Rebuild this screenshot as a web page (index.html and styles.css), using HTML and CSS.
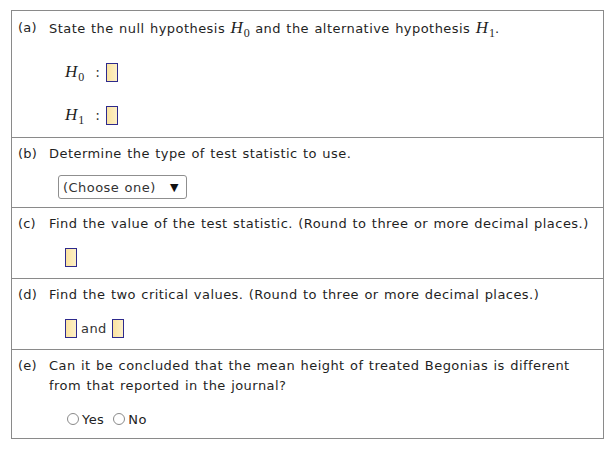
FILE: index.html
```html
<!DOCTYPE html>
<html>
<head>
<meta charset="utf-8">
<link rel="stylesheet" href="styles.css">
</head>
<body>
<div class="sheet">
  <div class="part part-a">
    <span class="tag">(a)</span>
    <div class="body">
      <div class="line">State the null hypothesis <span class="math"><i>H</i><sub>0</sub></span> and the alternative hypothesis <span class="math"><i>H</i><sub>1</sub></span>.</div>
      <div class="hyp"><span class="math"><i>H</i><sub>0</sub></span><span class="colon">:</span><span class="box"></span></div>
      <div class="hyp"><span class="math"><i>H</i><sub>1</sub></span><span class="colon">:</span><span class="box"></span></div>
    </div>
  </div>
  <div class="part part-b">
    <span class="tag">(b)</span>
    <div class="body">
      <div class="line">Determine the type of test statistic to use.</div>
      <div class="select"><span>(Choose one)</span><span class="arrow">&#9660;</span></div>
    </div>
  </div>
  <div class="part part-c">
    <span class="tag">(c)</span>
    <div class="body">
      <div class="line">Find the value of the test statistic. (Round to three or more decimal places.)</div>
      <div class="answers"><span class="box"></span></div>
    </div>
  </div>
  <div class="part part-d">
    <span class="tag">(d)</span>
    <div class="body">
      <div class="line">Find the two critical values. (Round to three or more decimal places.)</div>
      <div class="answers"><span class="box"></span><span class="and">and</span><span class="box"></span></div>
    </div>
  </div>
  <div class="part part-e">
    <span class="tag">(e)</span>
    <div class="body">
      <div class="line">Can it be concluded that the mean height of treated Begonias is different from that reported in the journal?</div>
      <div class="answers radios">
        <span class="radio"></span><span class="rlabel">Yes</span>
        <span class="radio second"></span><span class="rlabel">No</span>
      </div>
    </div>
  </div>
</div>
</body>
</html>
```
FILE: styles.css
```css
html, body {
  margin: 0;
  padding: 0;
  background: #ffffff;
}
body {
  font-family: "DejaVu Sans", Verdana, sans-serif;
  font-size: 13px;
  letter-spacing: 0.45px;
  word-spacing: 0.8px;
  color: #1f1f1f;
}
.sheet {
  margin: 10px 0 0 11px;
  width: 591px;
  border: 1px solid #8a8a8a;
}
.part {
  display: grid;
  grid-template-columns: 31px 1fr;
  padding: 6px 6px 0 6px;
  box-sizing: border-box;
  border-top: 1px solid #8a8a8a;
}
.part-a { border-top: none; height: 126px; padding-top: 7px; }
.part-b { height: 70px; }
.part-c { height: 71px; }
.part-d { height: 71px; }
.part-e { height: 89px; }
.tag {
  line-height: 20px;
  white-space: nowrap;
  letter-spacing: 0.2px;
}
.line {
  line-height: 20px;
}
.math {
  font-family: "Liberation Serif", "Times New Roman", serif;
  font-size: 17px;
  letter-spacing: 0;
  white-space: nowrap;
}
.math i {
  font-style: italic;
}
.math sub {
  font-size: 12px;
  vertical-align: -4px;
  margin-left: 1px;
  line-height: 0;
}
.hyp {
  display: flex;
  align-items: center;
  height: 20px;
  margin-left: 16px;
  margin-top: 23px;
}
.colon {
  margin-left: 11px;
  margin-right: 6px;
  font-size: 14px;
  color: #333;
}
.box {
  display: inline-block;
  width: 10px;
  height: 17px;
  border: 1px solid #2e2a8c;
  background: linear-gradient(to right, #fbe3a0, #fdf0c8);
}
.select {
  display: inline-flex;
  align-items: center;
  justify-content: space-between;
  box-sizing: border-box;
  width: 129px;
  height: 24px;
  margin-top: 11px;
  margin-left: 9px;
  padding: 0 7px 0 4px;
  border: 1px solid #8f8f8f;
  border-radius: 3px;
  color: #333;
}
.arrow {
  font-size: 11px;
  color: #111;
}
.answers {
  display: flex;
  align-items: center;
  margin-top: 13px;
  margin-left: 16px;
  height: 20px;
}
.and {
  margin: 0 5px 0 4px;
  color: #333;
}
.radios {
  margin-left: 18px;
}
.radio {
  display: inline-block;
  width: 10px;
  height: 10px;
  border: 1px solid #8a8a8a;
  border-radius: 50%;
  margin-right: 3px;
}
.radio.second {
  margin-left: 9px;
}
.rlabel {
  color: #222;
}
```
